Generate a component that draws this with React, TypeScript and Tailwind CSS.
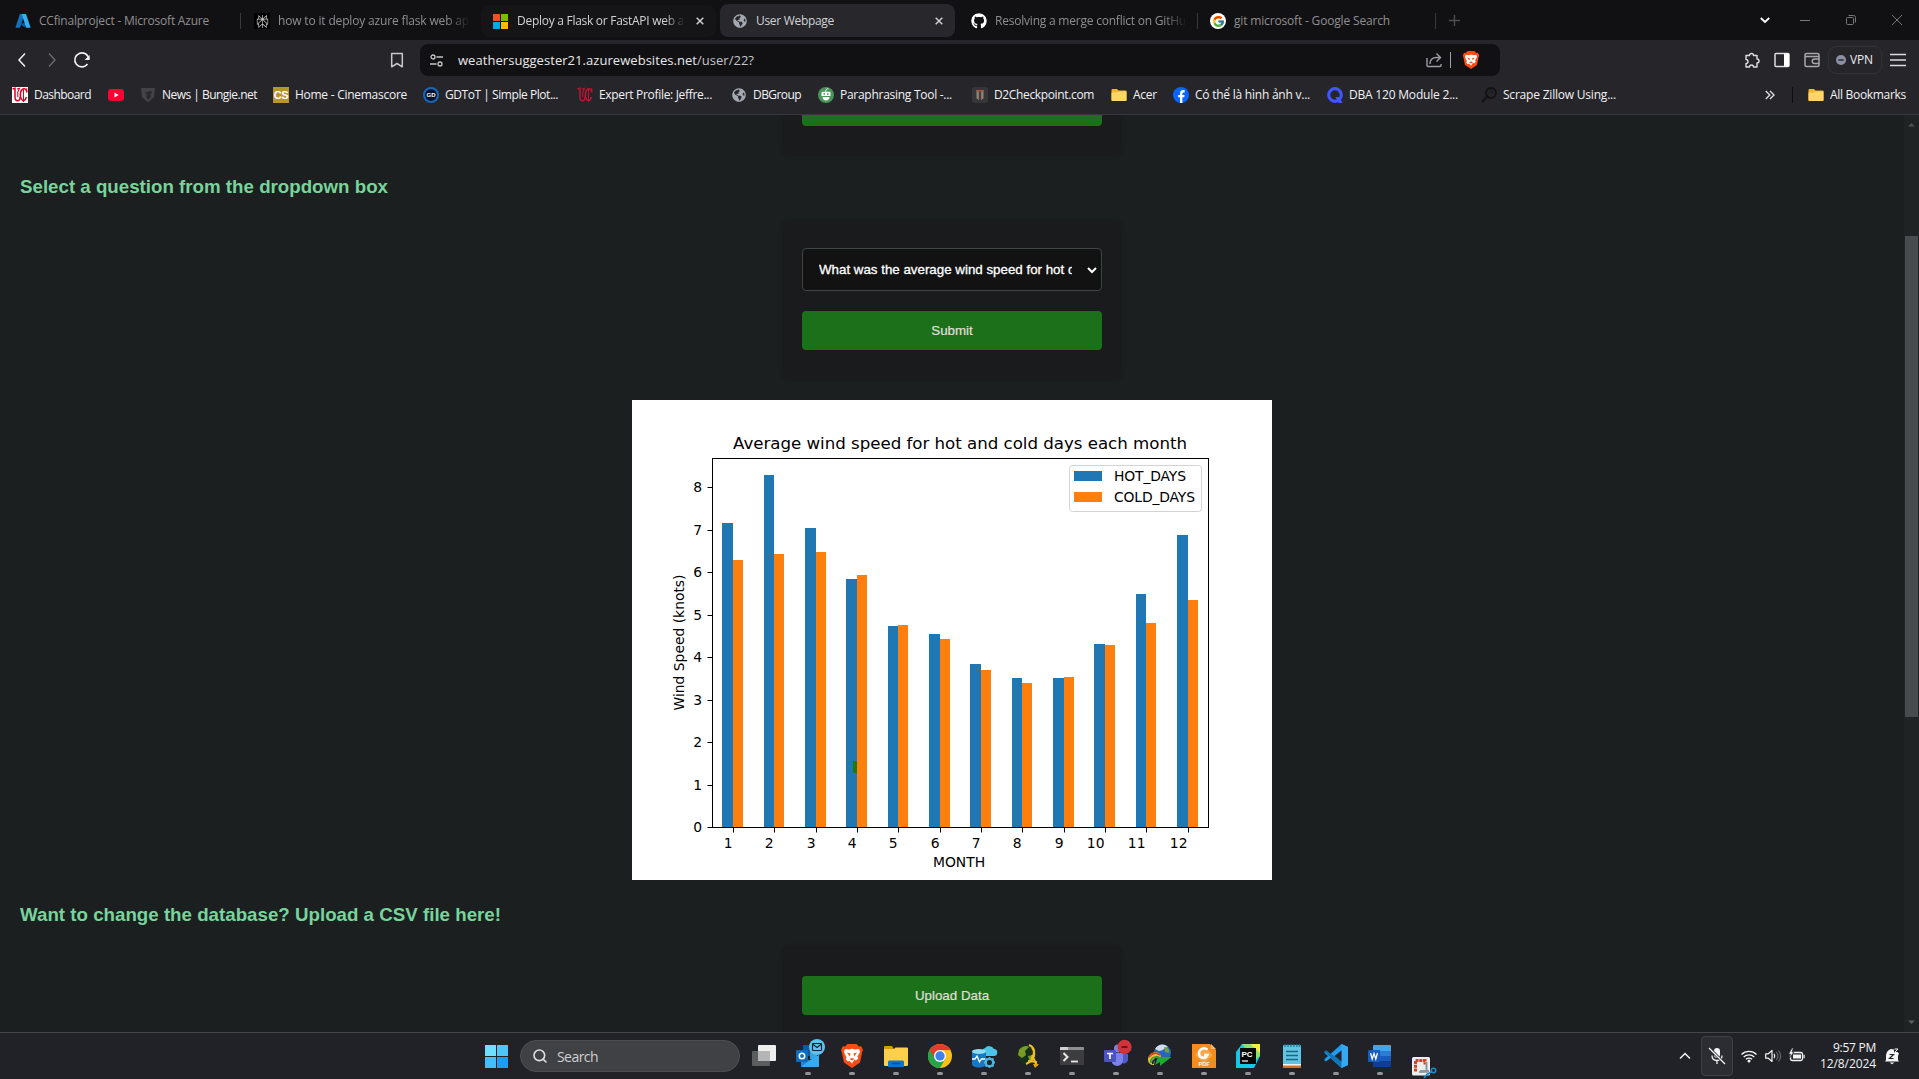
import React, { useLayoutEffect, useRef, useState } from "react";
import { FcGoogle } from "react-icons/fc";
import { FaGithub, FaGlobeAmericas } from "react-icons/fa";
import { SiPerplexity } from "react-icons/si";
import { Search } from "lucide-react";

type Kids = { children?: React.ReactNode };

/* A line of text whose letter spacing is adjusted so that it fills a given width. */
function Fit({ w, children, className = "" }: { w: number; children: string; className?: string }) {
  const ref = useRef<HTMLSpanElement>(null);
  const [spacing, setSpacing] = useState(0);
  useLayoutEffect(() => {
    if (!ref.current) return;
    const natural = ref.current.getBoundingClientRect().width;
    setSpacing((w - natural) / children.length);
  }, [w, children]);
  return (
    <span ref={ref} className={`inline-block shrink-0 whitespace-pre ${className}`} style={{ letterSpacing: spacing }}>
      {children}
    </span>
  );
}

function Svg({ s = 16, vb = "0 0 16 16", className = "", children }: Kids & { s?: number; vb?: string; className?: string }) {
  return (
    <svg width={s} height={s} viewBox={vb} fill="none" className={`block shrink-0 overflow-visible ${className}`}>
      {children}
    </svg>
  );
}

/* ---------- favicons ---------- */

const AzureIcon = () => (
  <Svg>
    <path d="M5.4 1h4.2L5.2 14.3a.7.7 0 0 1-.6.5H1.2a.6.6 0 0 1-.6-.9L4.7 1.5a.7.7 0 0 1 .7-.5z" fill="#1470b8" />
    <path d="M11.6 10.2H5.1l4.2 4.4z" fill="#0a5aa8" />
    <path d="M6.3 1h4.2c.3 0 .6.2.7.5l4.2 12.4a.7.7 0 0 1-.7.9h-4.4c.5 0 .7-.4.6-.9L6.8 1.5A.7.7 0 0 0 6.3 1z" fill="#35b0ee" />
  </Svg>
);
const MsIcon = () => (
  <div className="grid size-[15px] shrink-0 grid-cols-2 gap-px">
    <div className="bg-[#f25022]" />
    <div className="bg-[#7fba00]" />
    <div className="bg-[#00a4ef]" />
    <div className="bg-[#ffb900]" />
  </div>
);
const GlobeIcon = () => <FaGlobeAmericas size={14} className="shrink-0 text-[#a3a9b0]" />;
const FolderIcon = () => (
  <Svg>
    <path d="M.5 3a1 1 0 0 1 1-1H6l1.5 1.5h7a1 1 0 0 1 1 1V13a1 1 0 0 1-1 1h-13a1 1 0 0 1-1-1z" fill="#f2b632" />
    <path d="M.5 5.5h5l1.5-1h8.500V13a1 1 0 0 1-1 1h-13a1 1 0 0 1-1-1z" fill="#ffd766" />
  </Svg>
);
const UcIcon = ({ boxed = false }: { boxed?: boolean }) => (
  <Svg>
    {boxed && <rect width="16" height="16" fill="#fff" />}
    <g stroke={boxed ? "#e00122" : "#c41230"} fill="none">
      <path d="M.5 2l2.500-.7v8.700c0 2.500 1 3.800 2.700 3.800 1.500 0 2.300-1.500 2.300-4" strokeWidth="1.500" />
      <path d="M5 2l2.500-.7L5.800 5v5" strokeWidth="1.100" />
      <path d="M14.800 5.500C14.500 2.500 13 1 11 2 8.800 3.200 8.200 7 8.500 9.500s2 4.500 3.500 4c1.200-.4 2-1.800 2.400-3.500" strokeWidth="1.500" />
      <path d="M14.800 1.200v4M11.500 2.500v12.500" strokeWidth="1" />
    </g>
  </Svg>
);
const YtIcon = () => (
  <Svg>
    <rect y="2" width="16" height="12" rx="3.200" fill="#ff0033" />
    <path d="M6.500 5.500v5L10.600 8z" fill="#fff" />
  </Svg>
);
const BungieIcon = () => (
  <Svg>
    <path d="M1 1h14l-1 9-6 5.500L2 10z" fill="#434347" />
    <path d="M4 4.500l3 1 2-1.500 3.500.5-2 3L11 10l-3 3-2-3.500 1-2z" fill="#2a2a2e" />
  </Svg>
);
const CsIcon = () => (
  <div className="flex size-4 shrink-0 items-center justify-center bg-[#b8942c] font-['Liberation_Sans'] text-[11px] font-bold tracking-[-0.5px] text-white">CS</div>
);
const GdIcon = () => (
  <div className="flex size-4 shrink-0 items-center justify-center rounded-full border-2 border-[#1668b8] bg-[#07122e] font-['Liberation_Sans'] text-[6px] font-bold text-white">GD</div>
);
const QuillIcon = () => (
  <Svg>
    <circle cx="8" cy="8" r="8" fill="#499557" />
    <path d="M4.500 4.700h7a1 1 0 0 1 1 1V9h-9V5.700a1 1 0 0 1 1-1zM4.500 10h7c0 2.300-1.500 3.500-3.500 3.500S4.500 12.300 4.500 10z" fill="#fff" />
    <path d="M7.700 4.700c0-2 1-3 2.500-3.200" stroke="#fff" strokeWidth="1" />
    <path d="M5.500 6.300h1.600v1.400H5.500zM8.900 6.300h1.600v1.400H8.900zM6 11.500h4" stroke="none" fill="#499557" />
  </Svg>
);
const D2Icon = () => (
  <Svg>
    <rect width="16" height="16" rx="2.500" fill="#35353a" />
    <path d="M4 3h8v1.500H4z" fill="#a35b38" />
    <path d="M4.500 4.500h2.500v8.500l-2.500-1.500zM9 4.500h2.500v7L9 13z" fill="#8c8681" />
    <path d="M6.800 4v8M9.200 4v8" stroke="#a35b38" strokeWidth=".8" />
  </Svg>
);
const FbIcon = () => (
  <Svg>
    <circle cx="8" cy="8" r="8" fill="#0866ff" />
    <path d="M7 16v-5.700H5.100V7.900H7V6.700c0-2.500 1.200-3.600 3.500-3.600.4 0 .9.100 1.200.2v2.200h-.9c-1.100 0-1.400.4-1.400 1.400v1h2.200l-.4 2.400H9.400V16z" fill="#fff" />
  </Svg>
);
const QuizIcon = () => (
  <Svg>
    <circle cx="8" cy="8" r="6.300" stroke="#4255ff" strokeWidth="3.200" />
    <path d="M8.500 10h4l3 6h-4z" fill="#4255ff" />
  </Svg>
);
const MagnifierIcon = () => (
  <Svg>
    <circle cx="10" cy="6" r="5" stroke="#111113" strokeWidth="1.800" />
    <path d="M7 9l-6 6" stroke="#111113" strokeWidth="2" />
    <path d="M7.500 6h5M8 4h4" stroke="#1a1a1c" />
  </Svg>
);

/* ---------- tab strip ---------- */

const CloseX = () => (
  <Svg s={8} vb="0 0 8 8" className="ml-auto">
    <path d="M.7.700l6.600 6.600M7.300.700L.7 7.300" stroke="#d0d0d2" strokeWidth="1.500" />
  </Svg>
);
const Sep = () => <div className="h-4 w-px shrink-0 bg-[#3a3a3d]" />;

function TabStrip() {
  const fade = "[mask-image:linear-gradient(to_right,#000_88%,transparent)]";
  return (
    <div className="flex h-10 items-center bg-[#111113] pt-[2px] text-[12px] text-[#8f8f92]">
      <div className="flex w-[240px] items-center gap-2 pl-[15px]">
        <AzureIcon />
        <Fit w={170}>CCfinalproject - Microsoft Azure</Fit>
      </div>
      <Sep />
      <div className="flex w-[240px] items-center gap-2 pl-[13px]">
        <div className="flex size-4 shrink-0 items-center justify-center bg-black text-[#d8d8d8]">
          <SiPerplexity size={13} />
        </div>
        <div className={`w-[192px] ${fade}`}>
          <Fit w={191}>how to it deploy azure flask web ap</Fit>
        </div>
      </div>
      <div className="-mt-px flex h-8 w-[235px] items-center rounded-lg bg-[#151517] pt-px pr-3 pl-3 text-[#d2d2d4]">
        <MsIcon />
        <div className={`ml-[9px] w-[168px] ${fade}`}>
          <Fit w={167}>Deploy a Flask or FastAPI web a</Fit>
        </div>
        <CloseX />
      </div>
      <div className="-mt-px ml-[4px] flex h-[33px] w-[235px] items-center rounded-lg bg-[#27272c] pt-px pr-3 pl-[13px] text-[#d2d2d4]">
        <GlobeIcon />
        <Fit w={78} className="ml-[9px]">User Webpage</Fit>
        <CloseX />
      </div>
      <div className="flex w-[242px] items-center gap-2 pl-[16px]">
        <FaGithub size={16} className="shrink-0 rounded-full text-white" />
        <div className={`w-[192px] ${fade}`}>
          <Fit w={191}>Resolving a merge conflict on GitHu</Fit>
        </div>
      </div>
      <Sep />
      <div className="flex w-[237px] items-center gap-2 pl-[12px]">
        <div className="flex size-4 shrink-0 items-center justify-center rounded-full bg-white">
          <FcGoogle size={13} />
        </div>
        <Fit w={156}>git microsoft - Google Search</Fit>
      </div>
      <Sep />
      <Svg s={11} vb="0 0 11 11" className="mb-[2px] ml-[13px]">
        <path d="M5.500 0v11M0 5.500h11" stroke="#4d4d50" strokeWidth="1.400" />
      </Svg>
      <div className="mb-[2px] ml-auto flex items-center pr-[17px]">
        <Svg s={10} vb="0 0 10 10" className="mr-[30px]">
          <path d="M.8 3l4.200 4 4.200-4" stroke="#fff" strokeWidth="1.800" />
        </Svg>
        <Svg s={10} vb="0 0 10 10" className="mr-[36px]">
          <path d="M0 5.500h10" stroke="#777779" />
        </Svg>
        <Svg s={10} vb="0 0 10 10" className="mr-[36px]">
          <rect x=".5" y="2.500" width="7" height="7" rx="1" stroke="#777779" />
          <path d="M2.500.5h5a2 2 0 0 1 2 2v5" stroke="#777779" />
        </Svg>
        <Svg s={10} vb="0 0 10 10">
          <path d="M0 0l10 10M10 0L0 10" stroke="#777779" />
        </Svg>
      </div>
    </div>
  );
}

/* ---------- toolbar ---------- */

function Toolbar() {
  return (
    <div className="flex h-10 items-center bg-[#25252a]">
      <Svg className="ml-[14px]">
        <path d="M11 1.500L5 8l6 6.500" stroke="#f0f0f2" strokeWidth="1.500" />
      </Svg>
      <Svg className="ml-[14px]">
        <path d="M5 1.500L11 8l-6 6.500" stroke="#6b6b70" strokeWidth="1.400" />
      </Svg>
      <Svg className="ml-[14px]">
        <path d="M13.500 12A7 7 0 1 1 14.800 7" stroke="#f0f0f2" strokeWidth="1.600" />
        <path d="M15.600 3v5h-5z" fill="#f0f0f2" />
      </Svg>
      <Svg className="ml-[299px]">
        <path d="M2.700 1.500h10.600v13.300L8 11.500l-5.300 3.300z" stroke="#c8c8cb" strokeWidth="1.500" strokeLinejoin="round" />
      </Svg>
      <div className="ml-[15px] flex h-8 w-[1080px] items-center rounded-lg bg-[#111113] pl-[10px] text-[13px] text-[#e8e8ea]">
        <Svg s={13} vb="0 0 13 13">
          <circle cx="3" cy="3" r="2" stroke="#c6c6c9" strokeWidth="1.300" />
          <path d="M6.500 3H13M0 10h6.500" stroke="#c6c6c9" strokeWidth="1.300" />
          <circle cx="10" cy="10" r="2" stroke="#c6c6c9" strokeWidth="1.300" />
        </Svg>
        <Fit w={239} className="mt-[2px] ml-[15px]">weathersuggester21.azurewebsites.net</Fit>
        <Fit w={57} className="mt-[2px] text-[#c4c4c8]">/user/22?</Fit>
        <Svg className="ml-auto">
          <path d="M1 6v7.500a1 1 0 0 0 1 1h12a1 1 0 0 0 1-1V12M4 12c0-4 2-6.500 6.500-6.500H14M10.500 1.500L14.500 5.500l-4 4" stroke="#9d9da2" strokeWidth="1.400" />
        </Svg>
        <div className="mr-[11px] ml-[8px] h-4 w-px bg-[#a0a0a4]" />
        <BraveLion s={18} />
        <div className="w-5" />
      </div>
      <div className="ml-auto flex items-center">
        <Svg className="mr-[14px]">
          <path d="M2 3.500h3.500a2 2 0 1 1 4 0h3.500V7a2 2 0 1 1 0 4v4H9.500a1.900 1.900 0 1 0-4 0H2v-3.500a2 2 0 1 0 0-4z" stroke="#dedee1" strokeWidth="1.400" strokeLinejoin="round" />
        </Svg>
        <Svg className="mr-[14px]">
          <rect x="1" y="1.500" width="14" height="13" rx="1" stroke="#dedee1" strokeWidth="1.500" />
          <path d="M10 1.500h5v13h-5z" fill="#fff" />
        </Svg>
        <Svg className="mr-[8px]">
          <rect x="1" y="1.500" width="14" height="13" rx="1.500" stroke="#a8a8ac" strokeWidth="1.500" />
          <path d="M1 4.500h14M15 7H10.500a2 2 0 0 0 0 4.500H15" stroke="#a8a8ac" strokeWidth="1.500" />
        </Svg>
        <div className="flex h-[28px] w-[54px] items-center rounded-lg border border-[#313136] pl-[7px] text-[12px] font-medium text-[#ececef]">
          <Svg s={10} vb="0 0 10 10" className="mr-[4px]">
            <circle cx="5" cy="5" r="5" fill="#8d8fa3" />
            <path d="M2.300 5h5.400" stroke="#25252a" strokeWidth="1.400" />
          </Svg>
          <Fit w={23}>VPN</Fit>
        </div>
        <Svg className="mr-[13px] ml-[8px]">
          <path d="M0 2.500h16M0 8h16M0 13.500h16" stroke="#dcdce0" strokeWidth="1.400" />
        </Svg>
      </div>
    </div>
  );
}

/* ---------- bookmarks ---------- */

function Bookmark({ slot, w, label, icon }: { slot: number; w?: number; label?: string; icon: React.ReactNode }) {
  return (
    <div className="flex shrink-0 items-center" style={{ width: slot }}>
      <div className="mr-[6px] flex w-4 shrink-0 justify-center">{icon}</div>
      {label && <Fit w={w ?? 0}>{label}</Fit>}
    </div>
  );
}

function Bookmarks() {
  return (
    <div className="flex h-[35px] items-center border-b border-[#37373c] bg-[#25252a] pb-1 pl-3 text-[12px] text-[#f2f2f4]">
      <Bookmark slot={96} w={57} label="Dashboard" icon={<UcIcon boxed />} />
      <Bookmark slot={32} icon={<YtIcon />} />
      <Bookmark slot={133} w={95} label="News | Bungie.net" icon={<BungieIcon />} />
      <Bookmark slot={150} w={112} label="Home - Cinemascore" icon={<CsIcon />} />
      <Bookmark slot={154} w={113} label="GDToT | Simple Plot..." icon={<GdIcon />} />
      <Bookmark slot={154} w={113} label="Expert Profile: Jeffre..." icon={<UcIcon />} />
      <Bookmark slot={87} w={48} label="DBGroup" icon={<GlobeIcon />} />
      <Bookmark slot={154} w={112} label="Paraphrasing Tool -..." icon={<QuillIcon />} />
      <Bookmark slot={139} w={100} label="D2Checkpoint.com" icon={<D2Icon />} />
      <Bookmark slot={62} w={24} label="Acer" icon={<FolderIcon />} />
      <Bookmark slot={154} w={115} label="Có thể là hình ảnh v..." icon={<FbIcon />} />
      <Bookmark slot={154} w={109} label="DBA 120 Module 2..." icon={<QuizIcon />} />
      <Bookmark slot={284} w={113} label="Scrape Zillow Using..." icon={<MagnifierIcon />} />
      <Svg s={10} vb="0 0 10 10">
        <path d="M.8 1l4 4-4 4M5 1l4 4-4 4" stroke="#dcdce0" strokeWidth="1.400" />
      </Svg>
      <div className="mr-[15px] ml-[17px] h-4 w-px bg-[#0f0f11]" />
      <Bookmark slot={100} w={76} label="All Bookmarks" icon={<FolderIcon />} />
    </div>
  );
}

/* ---------- chart ---------- */

const HOT = [7.16, 8.29, 7.04, 5.84, 4.74, 4.55, 3.84, 3.51, 3.51, 4.31, 5.49, 6.88];
const COLD = [6.29, 6.43, 6.48, 5.94, 4.76, 4.43, 3.7, 3.4, 3.54, 4.29, 4.81, 5.35];

function Chart() {
  const base = 427;
  const unit = 42.5;
  const step = 496 / 12;
  const tick = (i: number) => Math.round(100.9 + step * i);
  const height = (v: number) => Math.round(v * unit - 0.3);
  return (
    <svg width="640" height="480" viewBox="0 0 640 480" className="mx-auto block bg-white font-['DejaVu_Sans'] text-[13.89px]">
      <g shapeRendering="crispEdges">
        {HOT.map((v, i) => {
          const x0 = Math.round(90.3 + step * i);
          return <rect key={i} x={x0} y={base - height(v)} width={tick(i) - x0} height={height(v)} fill="#1f77b4" />;
        })}
        {COLD.map((v, i) => {
          const x1 = Math.round(110.9 + step * i);
          return <rect key={i} x={tick(i)} y={base - height(v)} width={x1 - tick(i)} height={height(v)} fill="#ff7f0e" />;
        })}
        <rect x="221" y="361" width="4" height="12" fill="#1f7a0c" />
      </g>
      <rect x="80.500" y="58.500" width="496" height="369" fill="none" stroke="#000" />
      {HOT.map((_, i) => (
        <g key={i}>
          <path d={`M${tick(i) + 0.5} 427v5.500`} stroke="#000" />
          <text x={tick(i) - 0.5} y="448" textAnchor="end" fill="#000">{i + 1}</text>
        </g>
      ))}
      {Array.from({ length: 9 }, (_, v) => (
        <g key={v}>
          <path d={`M75.500 ${Math.round(base - v * unit) + 0.5}h5`} stroke="#000" />
          <text x="70" y={Math.round(base - v * unit) + 5} textAnchor="end" fill="#000">{v}</text>
        </g>
      ))}
      <text x="328" y="49" textAnchor="middle" textLength="454" fill="#000" className="text-[16.67px]">
        Average wind speed for hot and cold days each month
      </text>
      <text x="327" y="467" textAnchor="middle" fill="#000">MONTH</text>
      <text transform="translate(52 242.500) rotate(-90)" textAnchor="middle" fill="#000">Wind Speed (knots)</text>
      <rect x="437.500" y="65.500" width="132" height="46" rx="3" fill="#fff" stroke="#d3d3d3" />
      <rect x="442" y="71" width="28" height="10" fill="#1f77b4" />
      <rect x="442" y="92" width="28" height="10" fill="#ff7f0e" />
      <text x="482" y="81" textLength="72" fill="#000">HOT_DAYS</text>
      <text x="482" y="102" textLength="81" fill="#000">COLD_DAYS</text>
    </svg>
  );
}

/* ---------- page ---------- */

const Card = ({ className = "", children }: Kids & { className?: string }) => (
  <div className={`mx-auto w-[340px] rounded-lg bg-[#1a1b1d] px-5 shadow-[0_0_4px_rgba(0,0,0,0.08)] ${className}`}>{children}</div>
);
const GreenButton = ({ children }: Kids) => (
  <button className="block h-[39px] w-full rounded-[4px] bg-[#1c701a] font-['Liberation_Sans'] text-[13.330px] text-[#e2dfdb] [-webkit-text-stroke:0.2px]">
    {children}
  </button>
);
const Heading = ({ w, className = "", children }: { w: number; className?: string; children: string }) => (
  <h3 className={`pl-5 font-['Liberation_Sans'] text-[18.720px] leading-[22px] font-bold text-[#78d49b] ${className}`}>
    <Fit w={w}>{children}</Fit>
  </h3>
);

function Page() {
  return (
    <div className="flex h-[917px] overflow-hidden">
      <div className="h-full w-[1904px] overflow-hidden bg-[#1c1f20]">
        <div className="mx-auto h-[41px] w-[340px] rounded-b-lg bg-[#1a1b1d] px-5 shadow-[0_0_4px_rgba(0,0,0,0.08)]">
          <div className="h-[11px] rounded-b-[4px] bg-[#1c701a]" />
        </div>
        <Heading w={368} className="mt-[20px]">Select a question from the dropdown box</Heading>
        <Card className="mt-[21px] h-[162px] pt-[29px]">
          <div className="mb-5 flex h-[43px] items-center rounded-[4px] border border-[#3f4446] bg-[#121212] pr-[4px] pl-4 font-['Liberation_Sans'] text-[13.330px] text-white">
            <div className="w-[253px] overflow-hidden whitespace-nowrap [-webkit-text-stroke:0.3px]">What was the average wind speed for hot days</div>
            <Svg s={10} vb="0 0 10 10" className="ml-auto">
              <path d="M1 3l4 4 4-4" stroke="#fff" strokeWidth="2" />
            </Svg>
          </div>
          <GreenButton>Submit</GreenButton>
        </Card>
        <div className="mt-[19px]">
          <Chart />
        </div>
        <Heading w={481} className="mt-[24px]">Want to change the database? Upload a CSV file here!</Heading>
        <Card className="mt-[20px] h-[120px] pt-[30px]">
          <GreenButton>Upload Data</GreenButton>
        </Card>
      </div>
      <div className="flex w-[15px] flex-col items-center bg-[#1f2324] pt-[6px] pb-[6px]">
        <Svg s={7} vb="0 0 7 7">
          <path d="M0 5.500L3.500 2 7 5.500z" fill="#4d4f50" />
        </Svg>
        <div className="mt-[108px] h-[481px] w-[13px] bg-[#474b4d]" />
        <Svg s={7} vb="0 0 7 7" className="mt-auto">
          <path d="M0 1.500L3.500 5 7 1.500z" fill="#5c5e5f" />
        </Svg>
      </div>
    </div>
  );
}

/* ---------- taskbar ---------- */

function BraveLion({ s }: { s: number }) {
  return (
    <Svg s={s} vb="0 0 24 24">
      <path d="M7.500 0h9l2.500 2.500 2.200-.3L23 6l-.8 2L20 18.500 12 24l-8-5.500L1.800 8 1 6l1.800-3.800 2.200.3z" fill="#fb4b14" />
      <path d="M5 5l4 .5 3-.7 3 .7 4-.5 1 3-2.500 4.500.8 2-2.300 2-1.500-.8L12 19.500l-2.500-2.800-1.500.8-2.300-2 .8-2L4 8z" fill="#fff" />
      <path d="M7 8.500l3.500 1-.7 3zM17 8.500l-3.500 1 .7 3zM9.500 15l2.500-1 2.500 1-2.500 1.500z" fill="#fb4b14" />
    </Svg>
  );
}

function App24({ dot = true, children }: Kids & { dot?: boolean }) {
  return (
    <div className="flex h-[47px] w-11 shrink-0 flex-col items-center pt-[11px]">
      <svg width="24" height="24" viewBox="0 0 24 24" fill="none" className="block overflow-visible">
        {children}
      </svg>
      {dot && <div className="mt-[4px] h-[3px] w-[6px] rounded-full bg-[#929498]" />}
    </div>
  );
}

function TaskApps() {
  return (
    <div className="ml-[2px] flex">
      <App24 dot={false}>
        <rect x="0" y="7" width="18" height="15" rx="1" fill="#5c5d5f" />
        <rect x="6" y="1" width="18" height="16" rx="1" fill="#eeeeef" />
        <path d="M6 7h12v10H6z" fill="#b5b5b7" />
      </App24>
      <App24>
        <path d="M7 1h14v11H7z" fill="#0c5aa6" />
        <path d="M14 7h7v8h-7z" fill="#28a8ea" />
        <path d="M5 11l9 6 9-6v11a1 1 0 0 1-1 1H6a1 1 0 0 1-1-1z" fill="#1b88dc" />
        <path d="M5 23l9-7 9-5v11a1 1 0 0 1-1 1z" fill="#38abed" />
        <rect x="0" y="6" width="12" height="12" rx="1" fill="#0f6cbd" />
        <circle cx="6" cy="12" r="2.700" stroke="#fff" strokeWidth="1.600" />
        <circle cx="21" cy="3" r="8" fill="#5cc3f0" />
        <rect x="16.500" y="-.5" width="9" height="7" rx=".8" stroke="#10222c" strokeWidth="1.200" />
        <path d="M16.500 0l4.500 3.500L25.500 0" stroke="#10222c" strokeWidth="1.200" />
      </App24>
      <App24>
        <BraveLion s={24} />
      </App24>
      <App24>
        <path d="M0 3a1 1 0 0 1 1-1h7l2 3H0z" fill="#d99a06" />
        <path d="M0 5h10l1.500-1.500H23a1 1 0 0 1 1 1V21a1 1 0 0 1-1 1H1a1 1 0 0 1-1-1z" fill="#fdd04c" />
        <path d="M4 23v-5a1.500 1.500 0 0 1 1.500-1.500h13A1.500 1.500 0 0 1 20 18v5z" fill="#0f73c9" />
        <path d="M8 19.500h8" stroke="#0a4d8f" strokeWidth="1.400" />
      </App24>
      <App24>
        <circle cx="12" cy="12" r="12" fill="#fbc116" />
        <path d="M1.600 6A12 12 0 0 0 12 24l5.200-9L12 12z" fill="#28a34a" />
        <path d="M1.600 6A12 12 0 0 1 22.400 6H12a6 6 0 0 0-5.200 9z" fill="#e33b2e" />
        <path d="M1.600 6l5.200 9 2 2-5 3A12 12 0 0 1 1.600 6z" fill="#28a34a" />
        <circle cx="12" cy="12" r="6" fill="#fff" />
        <circle cx="12" cy="12" r="4.700" fill="#3f80ee" />
      </App24>
      <App24>
        <path d="M10 10a5 5 0 0 1 3-6 5.500 5.500 0 0 1 9 1 3.500 3.500 0 0 1-.5 7H12z" fill="#4cc5e8" />
        <path d="M0 7v13c0 2 3 3.500 7 3.500s7-1.500 7-3.500V7z" fill="#1878c6" />
        <ellipse cx="7" cy="7.500" rx="7" ry="2.500" fill="#8fdcf3" />
        <path d="M0 15h3l2-3 2.500 6 2-3H13" stroke="#fff" strokeWidth="1.300" />
        <circle cx="17.500" cy="18.500" r="3.700" fill="#202227" stroke="#49b6e0" strokeWidth="2.300" />
        <path d="M17.500 13v2M17.500 22v2M12 18.500h2M21 18.500h2M13.500 14.500l1.500 1.500M20 21l1.500 1.500M21.500 14.500L20 16M15 21l-1.500 1.500" stroke="#49b6e0" strokeWidth="1.800" />
      </App24>
      <App24>
        <circle cx="11" cy="10.500" r="10" fill="#17301c" />
        <path d="M3 6c3-4 8-5 10-3l-4 4 1 4-4 3-4-3zM12 12l5-1 1 4-4 4z" fill="#799c25" />
        <path d="M13 1c7 3 6 9 2 14M16 4c4 5 3 12-6 16M12 17l9 1M16 11l5 11" stroke="#f0bd28" strokeWidth="2" />
        <path d="M17 20h6l-4 4z" fill="#e5a50e" />
      </App24>
      <App24>
        <rect y="3" width="24" height="18" rx="1" fill="#3d3d40" />
        <path d="M0 6V4a1 1 0 0 1 1-1h22a1 1 0 0 1 1 1v2z" fill="#8e8f91" />
        <path d="M0 6V4a1 1 0 0 1 1-1h7v3z" fill="#d0d0d1" />
        <path d="M3.500 9l4 4-4 4" stroke="#e8e8e8" strokeWidth="2" />
        <path d="M11 17.500h7" stroke="#e8e8e8" strokeWidth="1.800" />
      </App24>
      <App24>
        <circle cx="14" cy="4.500" r="4" fill="#7b83eb" />
        <circle cx="21" cy="7" r="2.500" fill="#5059c9" />
        <path d="M17 10h7v6a4 4 0 0 1-7 2z" fill="#5059c9" />
        <path d="M8 9h11v8a6 6 0 0 1-11 2z" fill="#7b83eb" />
        <rect y="6" width="12" height="12" rx="1" fill="#4b53bc" />
        <path d="M3 9.500h6M6 9.500V15" stroke="#fff" strokeWidth="1.600" />
        <circle cx="20.500" cy="3" r="7.200" fill="#d13438" />
        <path d="M17.500 3h6" stroke="#501015" strokeWidth="1.600" />
      </App24>
      <App24>
        <circle cx="14.500" cy="9" r="8.500" fill="#2966b4" />
        <path d="M7 5c3-5 9-6 13-2-4 1-5 4-9 4z" fill="#cfdfe8" />
        <path d="M16 3c4 0 6 3 5 6l-4-1z" fill="#71a33b" />
        <path d="M0 15c1-6 7-9 12-5l1 3H7l-1 8C2 21 0 19 0 15z" fill="#e6c22d" />
        <path d="M1 13c3-4 7-5 11-2" stroke="#da3a2f" strokeWidth="1.600" />
        <path d="M3 19c-1-4 2-7 8-6" stroke="#37a043" strokeWidth="1.800" />
        <path d="M5 20c-1-3 1-5 5-5" stroke="#16283a" strokeWidth="1.800" />
        <path d="M10 13l13.500 0L12 22l0-4-5 3z" fill="#21a936" />
      </App24>
      <App24>
        <path d="M0 0h18l6 6v18H0z" fill="#f68b1f" />
        <path d="M19 0l5 5h-5z" fill="#fbb979" />
        <path d="M12 2l9 9-9 8-9-8z" fill="#fba748" />
        <path d="M15.500 5.500c-4-3-9 0-8.500 4.500.5 4.500 7 5 8.500 1h-3.500" stroke="#fff" strokeWidth="2.400" />
        <text x="12" y="22" textAnchor="middle" fill="#fff" className="font-['Liberation_Sans'] text-[5.5px] font-bold">PDF</text>
      </App24>
      <App24>
        <path d="M6 0h18v12l-6 12H0V8z" fill="#16c8e8" />
        <path d="M6 0h18v12l-5 4z" fill="#8be26c" />
        <path d="M14 0h10v9z" fill="#f2ee4a" />
        <rect x="4" y="4" width="16" height="16" fill="#060606" />
        <text x="5.500" y="12.500" fill="#fff" className="font-['Liberation_Sans'] text-[8px] font-bold">PC</text>
        <path d="M6 17h6" stroke="#fff" strokeWidth="1.200" />
      </App24>
      <App24>
        <rect x="3" y="1" width="18" height="21" rx="1" fill="#62c3e2" />
        <path d="M3 21.500h18V24H3z" fill="#d0702a" />
        <path d="M3 20h18v1.500H3z" fill="#e8f5f9" />
        <path d="M6 7.500h12M6 11.500h12M6 15.500h12" stroke="#176982" strokeWidth="1.500" />
        <path d="M5 0v3M8 0v3M11 0v3M14 0v3M17 0v3M19.500 0v3" stroke="#1d7592" strokeWidth="1.200" />
      </App24>
      <App24>
        <path d="M17.500 0L24 3v18l-6.500 3L6.500 14 2 17.500.500 16.500V7.500L2 6.500 6.500 10z" fill="#1f9cf0" />
        <path d="M.5 7.500L17.500 24l.500-6.500L2 6.500z" fill="#0d76bb" />
        <path d="M17.500 0L24 3v18l-6.500 3z" fill="#35a8f4" />
        <path d="M17.500 6.500v11L10.500 12zM0 8.500v7L4 12z" fill="#20232a" />
      </App24>
      <App24>
        <path d="M5 2a1 1 0 0 1 1-1h16a1 1 0 0 1 1 1v5H5z" fill="#41a5ee" />
        <path d="M5 7h18v5H5z" fill="#2b7cd3" />
        <path d="M5 12h18v5H5z" fill="#185abd" />
        <path d="M5 17h18v5a1 1 0 0 1-1 1H6a1 1 0 0 1-1-1z" fill="#103f91" />
        <rect y="6" width="12" height="12" rx="1" fill="#185abd" />
        <path d="M2.500 9l1.700 6L6 9.500 7.800 15l1.700-6" stroke="#fff" strokeWidth="1.300" />
      </App24>
      <App24 dot={false}>
        <rect x="0" y="13" width="18" height="18.500" rx="1.500" fill="#eceeef" />
        <path d="M3.500 27.500v-11h9.500v4" stroke="#d8431f" strokeWidth="3" strokeDasharray="3 .7" />
        <path d="M7 28h6" stroke="#9aa1a5" strokeWidth="2" />
        <path d="M14.500 18v11M8 27h9" stroke="#8e979c" strokeWidth="2" />
        <circle cx="21.500" cy="26.500" r="2.200" stroke="#1d8bc9" strokeWidth="1.600" />
        <path d="M19.500 27.500l-5 3.500M12 34l4-5" stroke="#1d8bc9" strokeWidth="1.600" />
      </App24>
    </div>
  );
}

function Tray() {
  return (
    <div className="ml-auto flex items-center pr-[19px] text-[#f4f4f5]">
      <Svg s={12} vb="0 0 12 12" className="mr-[10px]">
        <path d="M1 8.500l5-5 5 5" stroke="#f4f4f5" strokeWidth="1.500" />
      </Svg>
      <div className="flex h-10 w-8 items-center justify-center rounded-[4px] border border-[#3e4045] bg-[#2b2d32]">
        <Svg>
          <rect x="5" y="0" width="6" height="10" rx="3" fill="#f4f4f5" />
          <path d="M3 7.500c0 3 2 5 5 5s5-2 5-5M8 12.500V16" stroke="#f4f4f5" strokeWidth="1.300" />
          <path d="M0 0l16 16" stroke="#2b2d32" strokeWidth="3" />
          <path d="M0 0l16 16" stroke="#f4f4f5" strokeWidth="1.200" />
        </Svg>
      </div>
      <Svg className="ml-[8px]">
        <path d="M.5 6.500a10.600 10.600 0 0 1 15 0M2.700 9a7.500 7.500 0 0 1 10.600 0M5 11.300a4.200 4.200 0 0 1 6 0" stroke="#f4f4f5" strokeWidth="1.300" />
        <circle cx="8" cy="13" r="1.500" fill="#f4f4f5" />
      </Svg>
      <Svg className="ml-[8px]">
        <path d="M.7 5.800h2.600L7 2.500v11l-3.700-3.300H.700z" stroke="#f4f4f5" strokeWidth="1.200" strokeLinejoin="round" />
        <path d="M9 5.800c1 1.400 1 3 0 4.400" stroke="#f4f4f5" strokeWidth="1.200" />
        <path d="M11.300 4c2 2.500 2 5.500 0 8M13.500 2.500c2.700 3.500 2.700 7.500 0 11" stroke="#66686c" strokeWidth="1.200" />
      </Svg>
      <Svg className="ml-[8px]">
        <rect x="1.500" y="4.500" width="12" height="8" rx="1.800" stroke="#f4f4f5" strokeWidth="1.300" />
        <rect x="4" y="6.500" width="8" height="4" fill="#f4f4f5" />
        <path d="M14.500 6.800v3.500h1.200V6.800z" fill="#f4f4f5" />
        <path d="M3 0L-.5 6h2L.500 10 5 4H3L4.500 0z" fill="#f4f4f5" stroke="#202227" strokeWidth=".7" />
      </Svg>
      <div className="ml-[16px] flex w-[56px] flex-col items-end pr-px text-[12px] leading-4">
        <Fit w={43}>9:57 PM</Fit>
        <Fit w={56}>12/8/2024</Fit>
      </div>
      <Svg className="ml-[7px]">
        <path d="M2 12V7a6 6 0 0 1 8-5.500V5h5l-1 3v4l1 1.500H1z" fill="#f4f4f5" />
        <path d="M5.500 14.500h5L8 16.300z" fill="#f4f4f5" />
        <path d="M10.500 1H14l-3.500 3.500H14" stroke="#f4f4f5" strokeWidth="1" />
        <path d="M5.500 6.500h4l-4 4h4" stroke="#202227" strokeWidth="1.200" />
      </Svg>
    </div>
  );
}

function Taskbar() {
  return (
    <div className="flex h-[47px] items-center border-t border-[#45464a] bg-[#202227]">
      <div className="ml-[485px] grid size-[23px] grid-cols-2 gap-px">
        <div className="bg-[#6fe0fb]" />
        <div className="bg-[#4fc6f8]" />
        <div className="bg-[#45bdf7]" />
        <div className="bg-[#1d9df2]" />
      </div>
      <div className="ml-3 flex h-8 w-[220px] items-center rounded-full border border-[#4c4d51] bg-[#404145] pl-[11px] text-[14px] text-[#cfcfd1]">
        <Search size={16} strokeWidth={2.400} className="text-[#dededf]" />
        <Fit w={41} className="ml-[9px]">Search</Fit>
      </div>
      <TaskApps />
      <Tray />
    </div>
  );
}

export default function App() {
  return (
    <div className="h-[1079px] w-[1919px] overflow-hidden bg-[#1c1f20] font-['Open_Sans','Noto_Sans',sans-serif]">
      <TabStrip />
      <Toolbar />
      <Bookmarks />
      <Page />
      <Taskbar />
    </div>
  );
}
